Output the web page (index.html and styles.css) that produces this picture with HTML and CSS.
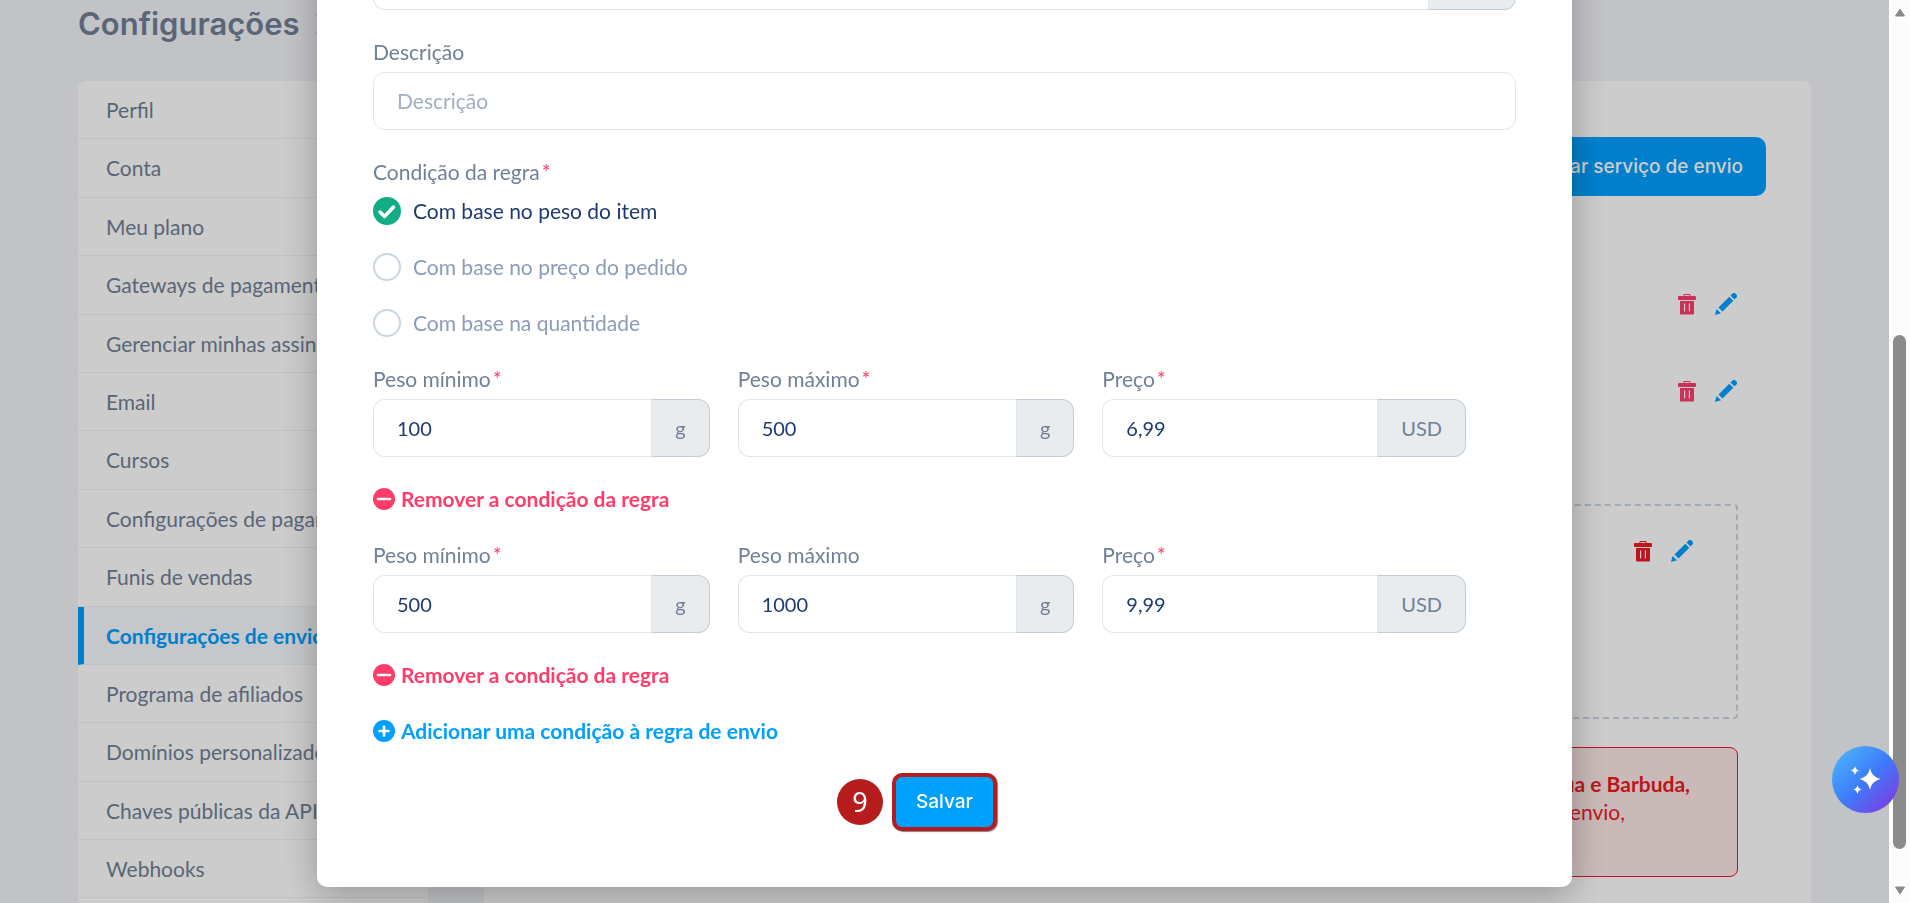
FILE: index.html
```html
<!DOCTYPE html>
<html lang="pt">
<head>
    <meta charset="UTF-8">
    <meta name="viewport" content="width=device-width, initial-scale=1.0">
    <title>Configurações de envio</title>
    <link rel="stylesheet" href="styles.css">
</head>
<body>
    <svg class="sprite" aria-hidden="true">
        <symbol id="icon-trash" viewBox="0 0 18 22">
            <path d="M6 3V1.500h6V3" fill="none" stroke="currentColor" stroke-width="1"/>
            <rect x="0" y="3" width="18" height="4" rx="1" fill="currentColor"/>
            <path fill-rule="evenodd" d="M2 8h14v12.500a1 1 0 0 1-1 1H3a1 1 0 0 1-1-1zM6 10.500v8h1.200v-8zM10.800 10.500v8H12v-8z" fill="currentColor"/>
        </symbol>
        <symbol id="icon-pencil" viewBox="0 0 22 22">
            <path d="M15.500 2.500 17.300.8a2.400 2.400 0 0 1 3.400 0l.5.500a2.400 2.400 0 0 1 0 3.400L19.500 6.500zM14.300 3.700l4 4L7.500 18.500l-4-4zM1.500 16 6 20.300 0 22z" fill="currentColor"/>
        </symbol>
        <symbol id="icon-minus" viewBox="0 0 22 22">
            <circle cx="11" cy="11" r="11" fill="currentColor"/>
            <path d="M5 11h12" stroke="#fff" stroke-width="2.600" stroke-linecap="round"/>
        </symbol>
        <symbol id="icon-plus" viewBox="0 0 22 22">
            <circle cx="11" cy="11" r="11" fill="currentColor"/>
            <path d="M6.500 11h9M11 6.500v9" stroke="#fff" stroke-width="2.600" stroke-linecap="round"/>
        </symbol>
    </svg>

    <div class="page">
        <header class="page-header">
            <h1>Configurações</h1>
            <svg class="chevron" width="12" height="20" viewBox="0 0 12 20" aria-hidden="true"><path d="M1 1l9 9-9 9" fill="none" stroke="currentColor" stroke-width="2"/></svg>
        </header>
        <div class="columns">
            <nav class="sidebar">
                <a href="#">Perfil</a>
                <a href="#">Conta</a>
                <a href="#">Meu plano</a>
                <a href="#">Gateways de pagamento</a>
                <a href="#">Gerenciar minhas assinaturas</a>
                <a href="#">Email</a>
                <a href="#">Cursos</a>
                <a href="#">Configurações de pagamento</a>
                <a href="#">Funis de vendas</a>
                <a href="#" class="active">Configurações de envio</a>
                <a href="#">Programa de afiliados</a>
                <a href="#">Domínios personalizados</a>
                <a href="#">Chaves públicas da API</a>
                <a href="#">Webhooks</a>
                <a href="#">&nbsp;</a>
            </nav>
            <main class="content">
                <div class="toolbar">
                    <button class="btn">Criar serviço de envio</button>
                </div>
                <div class="service-row">
                    <button class="icon-btn trash" aria-label="Excluir"><svg width="18" height="22"><use href="#icon-trash"/></svg></button>
                    <button class="icon-btn pencil" aria-label="Editar"><svg width="22" height="22"><use href="#icon-pencil"/></svg></button>
                </div>
                <div class="service-row">
                    <button class="icon-btn trash" aria-label="Excluir"><svg width="18" height="22"><use href="#icon-trash"/></svg></button>
                    <button class="icon-btn pencil" aria-label="Editar"><svg width="22" height="22"><use href="#icon-pencil"/></svg></button>
                </div>
                <div class="zone">
                    <button class="icon-btn trash dark" aria-label="Excluir"><svg width="18" height="22"><use href="#icon-trash"/></svg></button>
                    <button class="icon-btn pencil" aria-label="Editar"><svg width="22" height="22"><use href="#icon-pencil"/></svg></button>
                </div>
                <div class="alert">
                    <strong>Antígua e Barbuda,</strong>
                    <span>envio,</span>
                </div>
            </main>
        </div>
    </div>

    <div class="overlay">
        <form class="modal" role="dialog" aria-label="Regra de envio">
            <div class="input-group">
                <input type="text" aria-label="Valor">
                <span class="unit unit-empty"></span>
            </div>

            <div class="field">
                <label for="description">Descrição</label>
                <div class="input-group">
                    <input type="text" id="description" placeholder="Descrição">
                </div>
            </div>

            <fieldset class="radios">
                <legend>Condição da regra<span class="req">*</span></legend>
                <label class="radio">
                    <input type="radio" name="condition" checked>
                    <svg class="tick" width="28" height="28" viewBox="0 0 28 28" aria-hidden="true"><path d="M7 15l4.500 4.500L20.500 10" fill="none" stroke="#fff" stroke-width="3.500" stroke-linecap="round" stroke-linejoin="round"/></svg>
                    <span>Com base no peso do item</span>
                </label>
                <label class="radio">
                    <input type="radio" name="condition">
                    <span>Com base no preço do pedido</span>
                </label>
                <label class="radio">
                    <input type="radio" name="condition">
                    <span>Com base na quantidade</span>
                </label>
            </fieldset>

            <div class="rule">
                <div class="field">
                    <label for="min1">Peso mínimo<span class="req">*</span></label>
                    <div class="input-group"><input type="text" id="min1" value="100"><span class="unit">g</span></div>
                </div>
                <div class="field">
                    <label for="max1">Peso máximo<span class="req">*</span></label>
                    <div class="input-group"><input type="text" id="max1" value="500"><span class="unit">g</span></div>
                </div>
                <div class="field">
                    <label for="price1">Preço<span class="req">*</span></label>
                    <div class="input-group"><input type="text" id="price1" value="6,99"><span class="unit">USD</span></div>
                </div>
            </div>
            <button type="button" class="link-btn remove"><svg width="22" height="22"><use href="#icon-minus"/></svg>Remover a condição da regra</button>

            <div class="rule">
                <div class="field">
                    <label for="min2">Peso mínimo<span class="req">*</span></label>
                    <div class="input-group"><input type="text" id="min2" value="500"><span class="unit">g</span></div>
                </div>
                <div class="field">
                    <label for="max2">Peso máximo</label>
                    <div class="input-group"><input type="text" id="max2" value="1000"><span class="unit">g</span></div>
                </div>
                <div class="field">
                    <label for="price2">Preço<span class="req">*</span></label>
                    <div class="input-group"><input type="text" id="price2" value="9,99"><span class="unit">USD</span></div>
                </div>
            </div>
            <button type="button" class="link-btn remove"><svg width="22" height="22"><use href="#icon-minus"/></svg>Remover a condição da regra</button>
            <button type="button" class="link-btn add"><svg width="22" height="22"><use href="#icon-plus"/></svg>Adicionar uma condição à regra de envio</button>

            <div class="actions">
                <div class="save">
                    <span class="step">9</span>
                    <button type="button" class="btn save-btn">Salvar</button>
                </div>
            </div>
        </form>
    </div>

    <div class="scrollbar" aria-hidden="true">
        <svg width="12" height="9" viewBox="0 0 12 9"><path d="M6 1l4.500 7h-9z" fill="#8b8b8b" stroke="#8b8b8b" stroke-linejoin="round"/></svg>
        <div class="thumb"></div>
        <svg width="12" height="9" viewBox="0 0 12 9"><path d="M6 8l4.500-7h-9z" fill="#8b8b8b" stroke="#8b8b8b" stroke-linejoin="round"/></svg>
    </div>

    <button class="assistant" aria-label="Assistente">
        <svg width="32" height="32" viewBox="0 0 32 32" fill="#fff">
            <path d="M20 4c1.500 6.500 4 9 10.500 11-6.500 2-9 4.500-10.500 11-1.500-6.500-4-9-10.500-11C16 13 18.500 10.500 20 4z"/>
            <path d="M5 2c.8 3 1.700 3.800 4.500 4.500C6.700 7.200 5.800 8 5 11 4.200 8 3.300 7.200.5 6.500 3.300 5.800 4.200 5 5 2z"/>
            <path d="M7.500 21c.8 3 1.700 3.800 4.500 4.500-2.800.7-3.700 1.500-4.500 4.500-.8-3-1.700-3.800-4.500-4.500 2.800-.7 3.700-1.500 4.500-4.500z"/>
        </svg>
    </button>
</body>
</html>
```
FILE: styles.css
```css
* {
    box-sizing: border-box;
}
body {
    margin: 0;
    height: 100vh;
    overflow: hidden;
    font-family: Lato, sans-serif;
    font-size: 21px;
    line-height: 28px;
    color: #718096;
    background-color: #f3f4f9;
}
button, input {
    font: inherit;
}
button {
    border: none;
    cursor: pointer;
}
svg {
    display: block;
    flex: none;
}
.sprite {
    display: none;
}

/* page behind the modal */
.page {
    height: 100vh;
    padding: 4px 99px 0 78px;
    overflow: hidden;
}
.page-header {
    display: flex;
    align-items: center;
    gap: 16px;
    height: 40px;
    margin-bottom: 37px;
}
h1 {
    margin: 0;
    font-family: Inter, sans-serif;
    font-size: 31px;
    font-weight: 600;
    line-height: 40px;
}
.columns {
    display: grid;
    grid-template-columns: 350px 1fr;
    gap: 56px;
}
.sidebar, .content {
    background-color: #fff;
    border-radius: 8px;
}
.sidebar {
    display: flex;
    flex-direction: column;
    overflow: hidden;
}
.sidebar a {
    padding: 14px 28px;
    border-bottom: 1px solid #f0f1f5;
    line-height: 1.4;
    color: #718096;
    text-decoration: none;
    white-space: nowrap;
}
.sidebar a.active {
    padding-left: 22px;
    border-left: 6px solid #00a0ff;
    background-color: #f8f9fd;
    color: #00a0ff;
    font-weight: 700;
}
.content {
    padding: 56px 45px 40px 56px;
}
.toolbar {
    display: flex;
    justify-content: flex-end;
    margin-bottom: 64px;
}
.btn {
    height: 59px;
    padding: 0 23px;
    border-radius: 10px;
    background-color: #00a0ff;
    color: #fff;
    font-family: Inter, sans-serif;
    font-size: 19px;
    font-weight: 500;
}
.service-row {
    display: flex;
    justify-content: flex-end;
    align-items: center;
    gap: 19px;
    height: 87px;
    padding-right: 29px;
}
.icon-btn {
    padding: 0;
    background: none;
}
.trash {
    color: #ff3c6a;
}
.trash.dark {
    color: #ec1c24;
}
.pencil {
    color: #00a0ff;
}
.zone {
    display: flex;
    justify-content: flex-end;
    align-items: flex-start;
    gap: 19px;
    height: 215px;
    margin: 70px 28px 28px 0;
    padding: 34px 43px;
    border: 2px dashed #cbd5e1;
    border-radius: 4px;
}
.alert {
    display: flex;
    flex-direction: column;
    align-items: flex-end;
    height: 130px;
    margin-right: 28px;
    padding: 22px 47px;
    border: 1px solid #ec1c24;
    border-radius: 8px;
    background-color: #fde8e8;
    color: #ec1c24;
}
.alert span {
    padding-right: 65px;
}

/* modal */
.overlay {
    position: fixed;
    inset: 0;
    display: flex;
    justify-content: center;
    align-items: flex-end;
    padding: 0 21px 16px 0;
    overflow: hidden;
    background-color: rgba(0, 0, 0, .2);
}
.modal {
    display: flex;
    flex-direction: column;
    gap: 28px;
    width: 100%;
    max-width: 1255px;
    padding: 56px;
    border-radius: 10px;
    background-color: #fff;
    box-shadow: 0 8px 36px rgba(0, 0, 0, .28);
}
.field {
    display: flex;
    flex-direction: column;
    gap: 6px;
    min-width: 0;
}
.req {
    margin-left: 2px;
    color: #ff3c6a;
}
.input-group {
    display: flex;
    height: 58px;
}
.input-group input {
    flex: 1;
    min-width: 0;
    padding: 0 23px;
    border: 1px solid #e2e5e9;
    border-radius: 12px;
    background-color: #fff;
    color: #1f3a70;
    font-size: 20px;
}
.input-group input::placeholder {
    color: #a0aec0;
    font-size: 21px;
}
.input-group input:not(:last-child) {
    border-right: none;
    border-radius: 12px 0 0 12px;
}
.unit {
    display: flex;
    align-items: center;
    padding: 0 23px;
    border: 1px solid #c3cbd5;
    border-left-color: #e2e5e9;
    border-radius: 0 12px 12px 0;
    background-color: #e9ecef;
    font-size: 20px;
}
.unit-empty {
    width: 88px;
}
.radios {
    display: flex;
    flex-direction: column;
    gap: 28px;
    margin: 0;
    padding: 0;
    border: none;
}
.radios legend {
    padding: 0;
    margin-bottom: 11px;
}
.radio {
    display: flex;
    align-items: center;
    gap: 12px;
    position: relative;
    color: #8c9bba;
}
.radio:has(:checked) {
    color: #1f3a70;
}
.radio input {
    appearance: none;
    width: 28px;
    height: 28px;
    margin: 0;
    border: 2px solid #cbd5e1;
    border-radius: 50%;
}
.radio input:checked {
    border-color: #13ad85;
    background-color: #13ad85;
}
.tick {
    position: absolute;
    left: 0;
    top: 0;
}
.rule {
    display: grid;
    grid-template-columns: 337fr 337fr 364fr;
    gap: 28px;
    padding-right: 50px;
}
.link-btn {
    display: flex;
    align-items: center;
    align-self: flex-start;
    gap: 6px;
    padding: 0;
    background: none;
    font-weight: 700;
}
.remove {
    color: #ff3c6a;
}
.add {
    color: #00a0ff;
}
.actions {
    display: flex;
    justify-content: center;
}
.save {
    position: relative;
}
.save-btn {
    height: 58px;
    padding: 0 20px;
    border: 4px solid #b71c1c;
    box-shadow: 1px 1px 1px rgba(0, 0, 0, .5);
}
.step {
    position: absolute;
    right: 100%;
    top: 6px;
    width: 46px;
    height: 46px;
    margin-right: 9px;
    border-radius: 50%;
    background-color: #b71c1c;
    color: #fff;
    font-family: "Noto Sans", sans-serif;
    font-size: 27px;
    line-height: 46px;
    text-align: center;
}

/* window scrollbar */
.scrollbar {
    position: fixed;
    top: 0;
    right: 0;
    bottom: 0;
    display: flex;
    flex-direction: column;
    align-items: center;
    justify-content: space-between;
    width: 21px;
    padding: 8px 0;
    background-color: #fcfcfc;
}
.thumb {
    width: 13px;
    height: 58%;
    margin-top: auto;
    margin-bottom: 37px;
    border-radius: 7px;
    background-color: #8b8b8b;
}
.assistant {
    position: fixed;
    right: 11px;
    bottom: 90px;
    display: flex;
    align-items: center;
    justify-content: center;
    width: 67px;
    height: 67px;
    padding: 0;
    border-radius: 50%;
    background: linear-gradient(135deg, #4bb0f8 10%, #3d7bfb 50%, #7b3fe4 90%);
}
```
